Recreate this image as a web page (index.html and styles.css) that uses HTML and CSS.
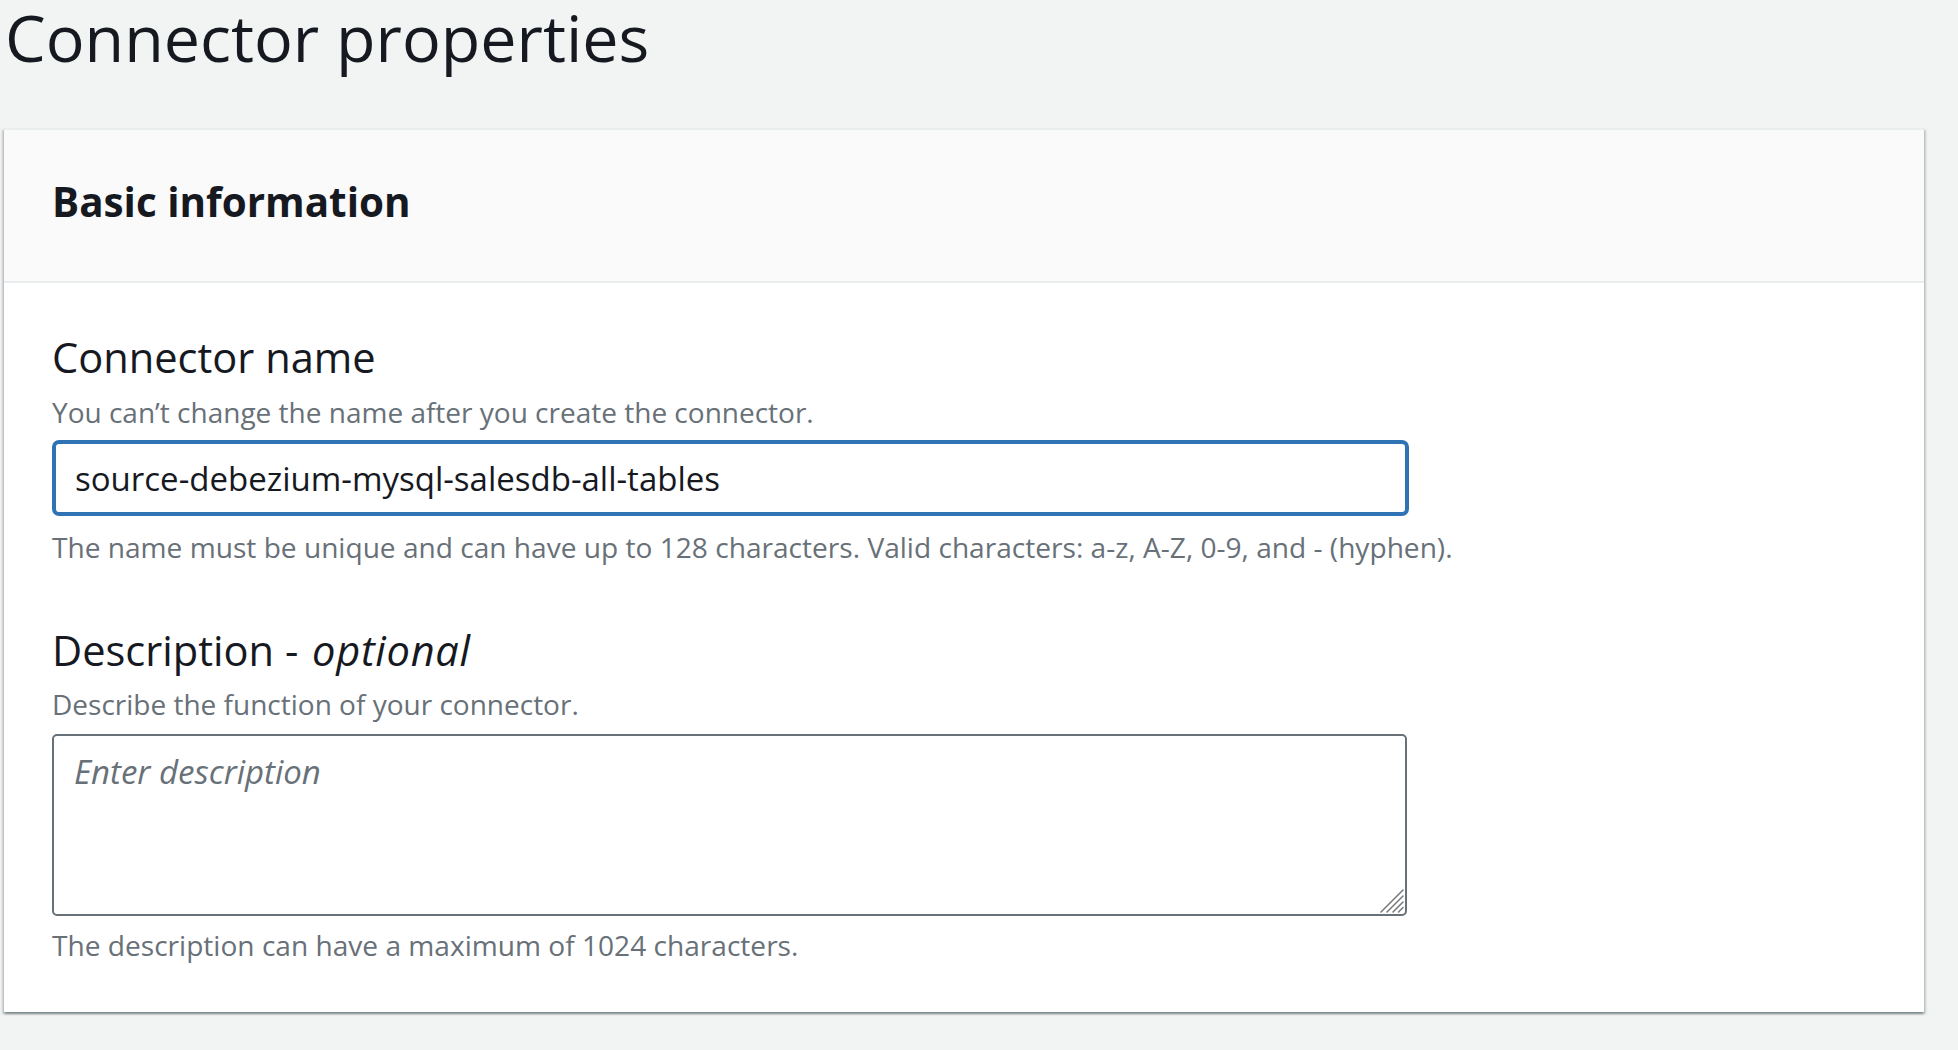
FILE: index.html
```html
<!DOCTYPE html>
<html lang="en">
<head>
<meta charset="utf-8">
<title>Connector properties</title>
<link rel="stylesheet" href="styles.css">
</head>
<body>
<main class="page">
  <h1 class="page-title">Connector properties</h1>
  <section class="card">
    <div class="card-header">
      <h2 class="card-title">Basic information</h2>
    </div>
    <div class="card-body">
      <div class="field">
        <label class="field-label" for="name">Connector name</label>
        <div class="field-desc">You can’t change the name after you create the connector.</div>
        <input id="name" class="text-input" type="text" value="source-debezium-mysql-salesdb-all-tables">
        <div class="field-hint">The name must be unique and can have up to 128 characters. Valid characters: a-z, A-Z, 0-9, and - (hyphen).</div>
      </div>
      <div class="field field-next">
        <label class="field-label" for="desc">Description - <i>optional</i></label>
        <div class="field-desc">Describe the function of your connector.</div>
        <div class="textarea-wrap">
          <textarea id="desc" class="text-area" placeholder="Enter description"></textarea>
          <svg class="grip" width="25" height="25" viewBox="0 0 25 25" aria-hidden="true">
            <line x1="2" y1="24" x2="24" y2="2"></line>
            <line x1="8" y1="24" x2="24" y2="8"></line>
            <line x1="14" y1="24" x2="24" y2="14"></line>
            <line x1="19.5" y1="24" x2="24" y2="19.5"></line>
          </svg>
        </div>
        <div class="field-hint field-hint-last">The description can have a maximum of 1024 characters.</div>
      </div>
    </div>
  </section>
</main>
</body>
</html>
```

FILE: styles.css
```css
html, body {
  margin: 0;
  padding: 0;
}

body {
  background: #f2f3f3;
  font-family: "Open Sans", "Noto Sans", sans-serif;
  color: #16191f;
  width: 1958px;
  height: 1050px;
  overflow: hidden;
}

.page {
  display: flex;
  flex-direction: column;
  align-items: flex-start;
}

.page-title {
  margin: 5px 0 0 5px;
  font-size: 64.6px;
  line-height: 64px;
  font-weight: 400;
  color: #16191f;
}

.card {
  margin: 59px 0 0 4px;
  width: 1920px;
  background: #ffffff;
  border-top: 2px solid #eaeded;
  box-shadow: 0 2px 2px 0 rgba(0, 28, 36, 0.3), 2px 2px 2px 0 rgba(0, 28, 36, 0.15), -2px 2px 2px 0 rgba(0, 28, 36, 0.15);
  box-sizing: border-box;
}

.card-header {
  background: #fafafa;
  border-bottom: 2px solid #eaeded;
  padding: 48px 48px 55px;
}

.card-title {
  margin: 0;
  font-size: 40.4px;
  line-height: 48px;
  font-weight: 700;
  color: #16191f;
}

.card-body {
  padding: 48px 48px 47px;
  display: flex;
  flex-direction: column;
}

.field {
  display: flex;
  flex-direction: column;
  align-items: flex-start;
}

.field-next {
  margin-top: 57px;
}

.field-label {
  font-size: 41.6px;
  line-height: 52px;
  color: #16191f;
}

.field-label i {
  font-style: italic;
  letter-spacing: 0.7px;
  padding-left: 3px;
}

.field-desc {
  margin-top: 9px;
  font-size: 28px;
  line-height: 40px;
  color: #687078;
}

.field-next .field-desc {
  margin-top: 8px;
}

.field-hint {
  margin-top: 11px;
  font-size: 28.1px;
  line-height: 40px;
  color: #687078;
}

.field-hint-last {
  margin-top: 9px;
}

.text-input {
  margin-top: 8px;
  width: 1357px;
  height: 76px;
  box-sizing: border-box;
  border: 4px solid #2f73b5;
  border-radius: 7px;
  padding: 0 19px;
  font-family: "Open Sans", "Noto Sans", sans-serif;
  font-size: 33px;
  color: #16191f;
  background: #ffffff;
  outline: none;
}

.textarea-wrap {
  position: relative;
  margin-top: 10px;
  width: 1355px;
  height: 182px;
}

.text-area {
  display: block;
  width: 100%;
  height: 100%;
  box-sizing: border-box;
  border: 2px solid #687078;
  border-radius: 5px;
  padding: 14px 20px;
  font-family: "Open Sans", "Noto Sans", sans-serif;
  font-size: 33px;
  line-height: 44px;
  color: #16191f;
  background: #ffffff;
  outline: none;
  resize: none;
}

.text-area::placeholder {
  color: #687078;
  font-style: italic;
  opacity: 1;
}

.grip {
  position: absolute;
  right: 3px;
  bottom: 3px;
  pointer-events: none;
}

.grip line {
  stroke: #7a7a7a;
  stroke-width: 1.6;
  stroke-linecap: round;
}
```
